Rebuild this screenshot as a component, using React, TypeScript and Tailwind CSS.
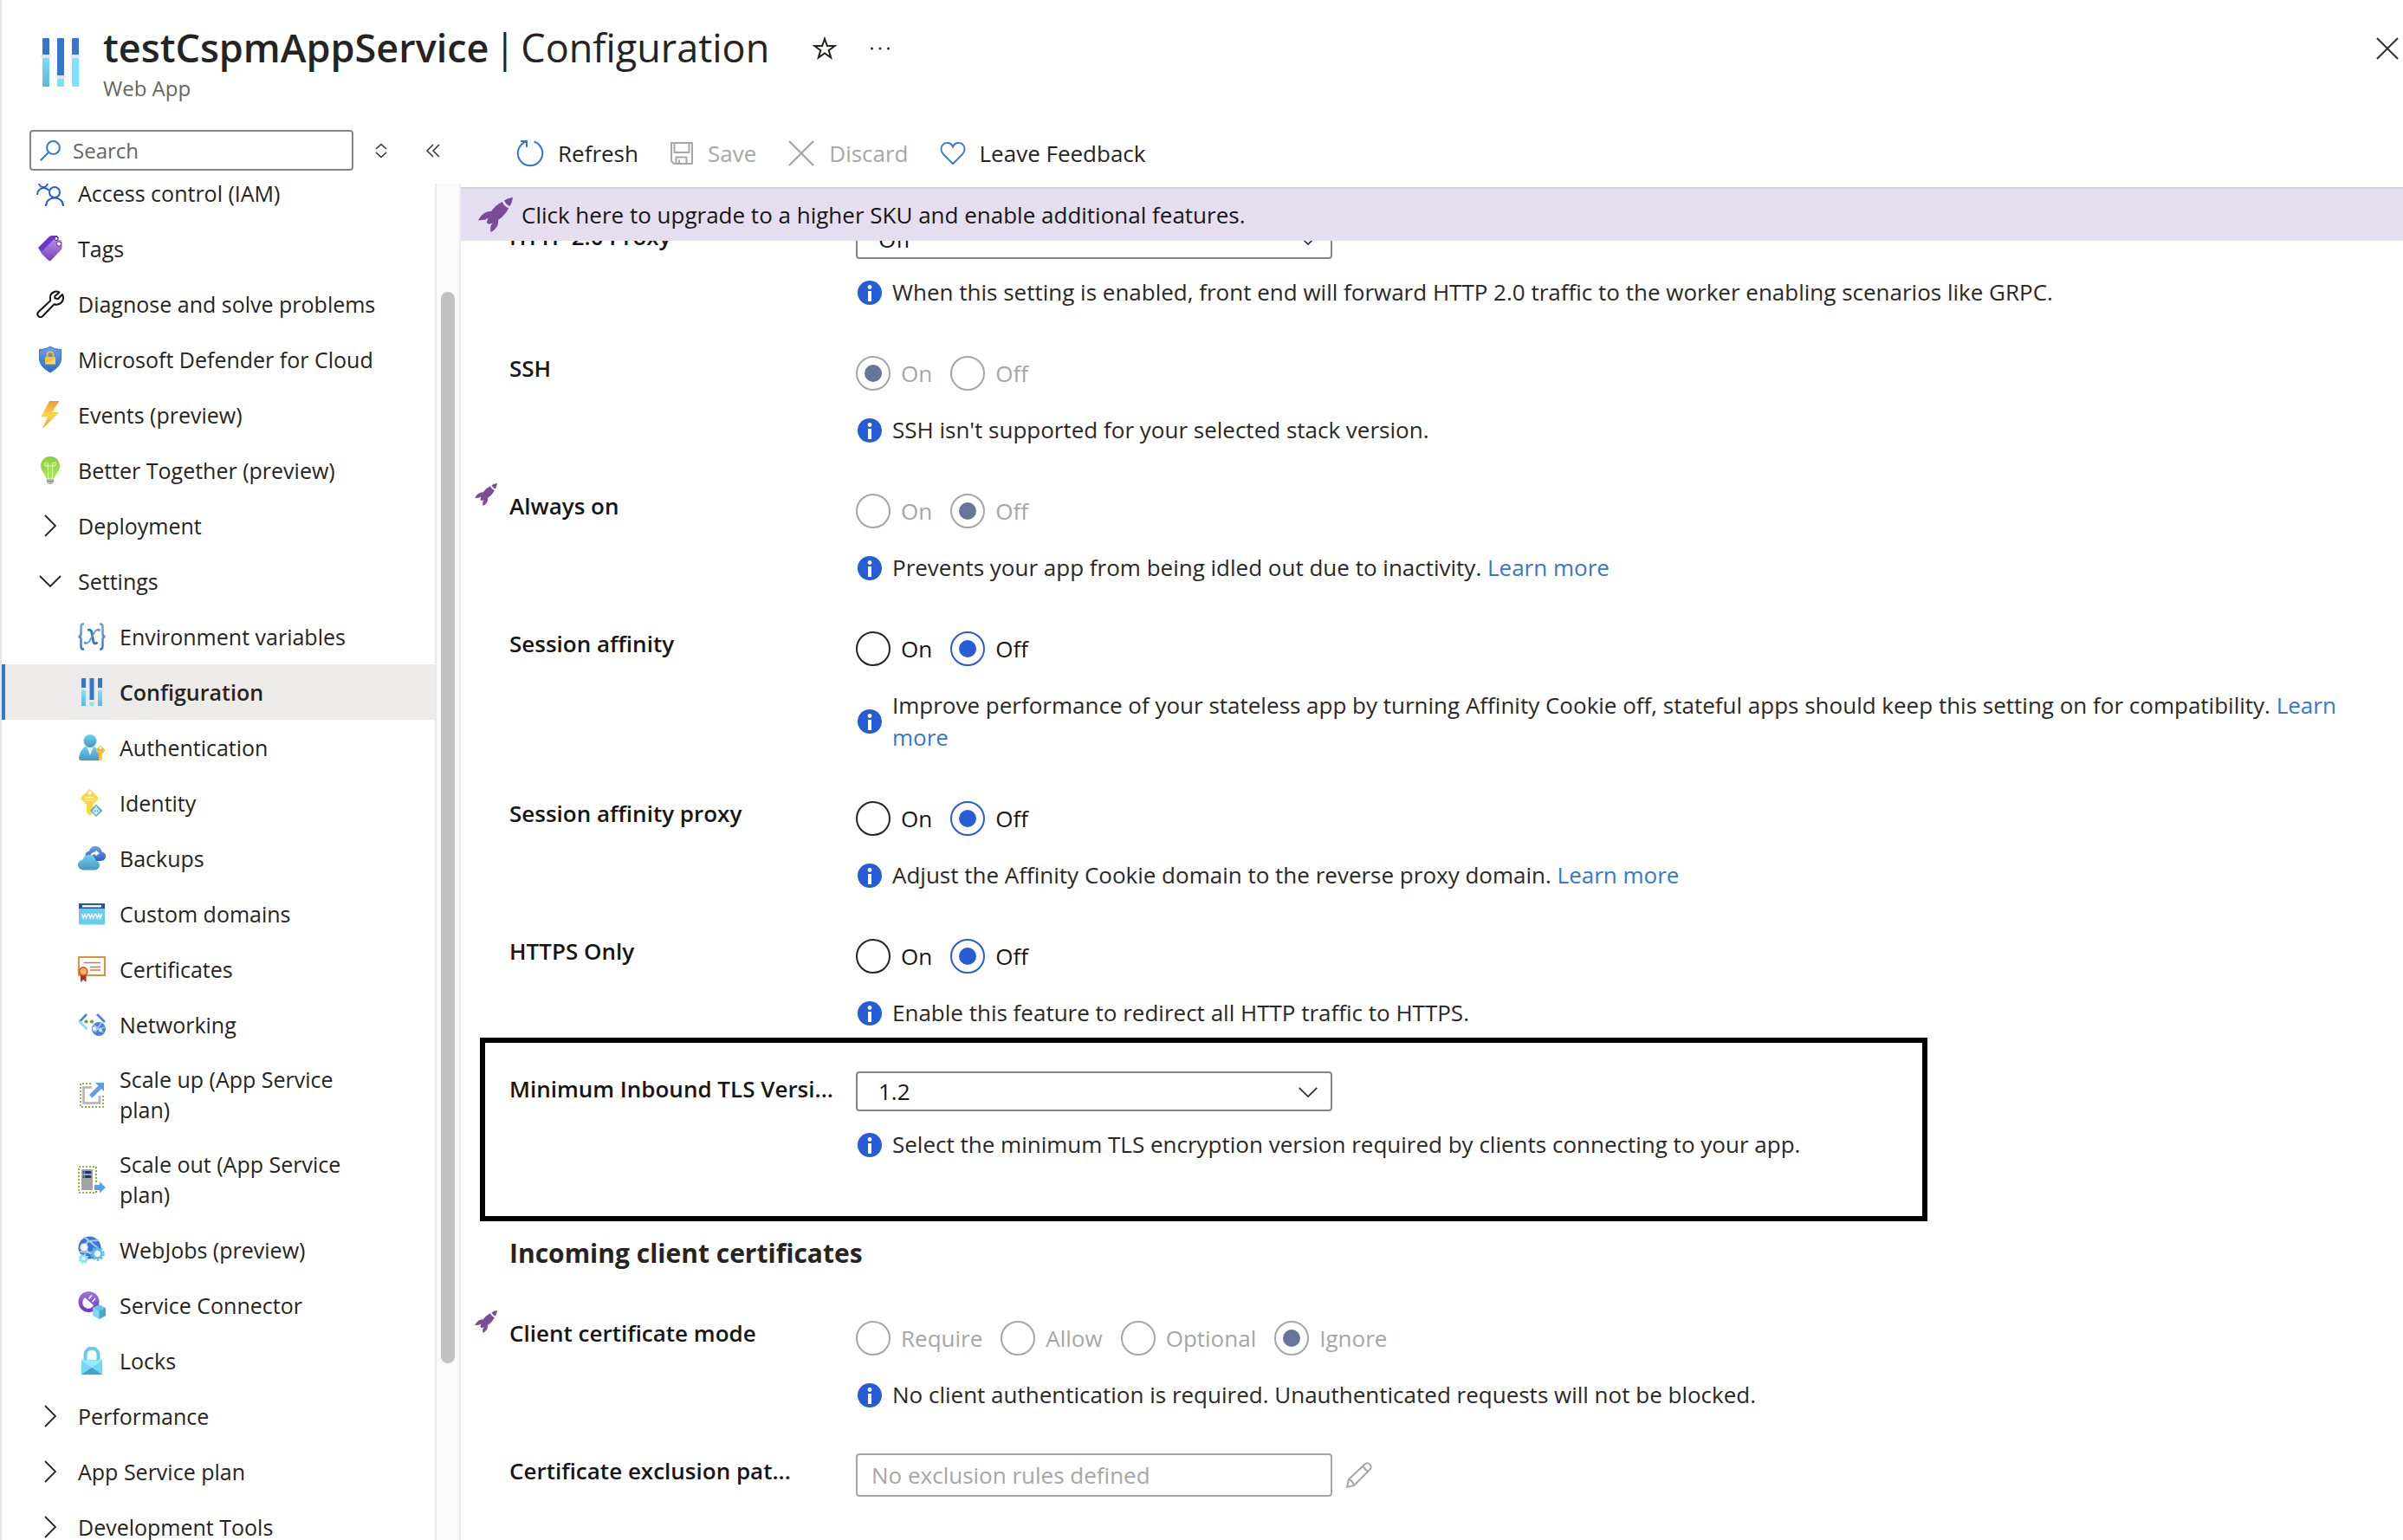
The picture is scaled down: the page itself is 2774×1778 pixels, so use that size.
import React from "react";

type IconProps = { className?: string };

/* ---------- header and toolbar icons ---------- */

const SlidersLarge = () => (
  <svg viewBox="0 0 46 56" className="h-14 w-[46px] shrink-0" aria-hidden="true">
    <defs>
      <linearGradient id="sl" x1="0" y1="0" x2="0" y2="1">
        <stop offset="0" stopColor="#7be3ff" />
        <stop offset="1" stopColor="#5fb4d4" />
      </linearGradient>
    </defs>
    <rect x="2" y="0" width="8" height="20" rx="1" fill="#3477d0" />
    <rect x="2" y="20" width="8" height="36" rx="1" fill="url(#sl)" />
    <rect x="19" y="0" width="8" height="44" rx="1" fill="#3477d0" />
    <rect x="19" y="44" width="8" height="12" rx="1" fill="#7be3ff" />
    <rect x="36" y="0" width="8" height="20" rx="1" fill="#3477d0" />
    <rect x="36" y="20" width="8" height="36" rx="1" fill="#7be3ff" />
    <rect x="0" y="19" width="12" height="4" rx="2" fill="#e6e6e6" />
    <rect x="17" y="43" width="12" height="4" rx="2" fill="#e6e6e6" />
    <rect x="34" y="19" width="12" height="4" rx="2" fill="#e6e6e6" />
  </svg>
);

const Star = () => (
  <svg viewBox="0 0 28 28" className="size-7" fill="none" stroke="#252423" strokeWidth="2" strokeLinejoin="miter" aria-hidden="true">
    <path d="M14 2.8 L16.9 11 H25.6 L18.7 16.1 L21.2 24.6 L14 19.5 L6.8 24.6 L9.3 16.1 L2.4 11 H11.1 Z" />
  </svg>
);

const Dots = () => (
  <svg viewBox="0 0 24 8" className="h-2 w-6" fill="#252423" aria-hidden="true">
    <circle cx="2.5" cy="4" r="1.5" />
    <circle cx="12" cy="4" r="1.5" />
    <circle cx="21.5" cy="4" r="1.5" />
  </svg>
);

const Close = () => (
  <svg viewBox="0 0 26 26" className="size-[26px]" fill="none" stroke="#323130" strokeWidth="2" aria-hidden="true">
    <path d="M1 1 L25 25 M25 1 L1 25" />
  </svg>
);

const Magnifier = () => (
  <svg viewBox="0 0 24 24" className="size-6 shrink-0" fill="none" stroke="#3477d0" strokeWidth="2" aria-hidden="true">
    <circle cx="15.5" cy="8.5" r="7.4" />
    <path d="M10 14 L0.7 23.3" />
  </svg>
);

const UpDown = () => (
  <svg viewBox="0 0 14 18" className="h-[18px] w-3.5" fill="none" stroke="#323130" strokeWidth="1.6" aria-hidden="true">
    <path d="M1 7 L7 1.5 L13 7 M1 11 L7 16.5 L13 11" />
  </svg>
);

const DoubleLeft = () => (
  <svg viewBox="0 0 16 16" className="size-4" fill="none" stroke="#323130" strokeWidth="1.5" aria-hidden="true">
    <path d="M8 1 L1 8 L8 15 M15 1 L8 8 L15 15" />
  </svg>
);

const Refresh = () => (
  <svg viewBox="0 0 32 32" className="size-8" fill="none" stroke="#3477d0" strokeWidth="2" aria-hidden="true">
    <path d="M20.500 2.500 A14.200 14.200 0 1 1 11.500 2.500" />
    <path d="M5 2 H12 V9" />
  </svg>
);

const SaveIcon = () => (
  <svg viewBox="0 0 28 28" className="size-7" fill="none" stroke="#a6a6a6" strokeWidth="2" strokeLinejoin="round" aria-hidden="true">
    <path d="M2 2 H26 V26 H5 L2 23 Z" />
    <path d="M5.5 2 V13 H22.5 V2" />
    <path d="M7.5 26 V18.5 H19.5 V26 M11 21.5 V26" />
  </svg>
);

const Discard = () => (
  <svg viewBox="0 0 32 32" className="size-8" fill="none" stroke="#a6a6a6" strokeWidth="2.4" aria-hidden="true">
    <path d="M2 2 L30 30 M30 2 L2 30" />
  </svg>
);

const Heart = () => (
  <svg viewBox="0 0 32 32" className="size-[30px]" fill="none" stroke="#3477d0" strokeWidth="2" aria-hidden="true">
    <path d="M16 8 C13.5 2 7 2.2 4 5 C.5 8.5 1 13.5 4 17 L16 29 L28 17 C31 13.5 31.500 8.500 28 5 C25 2.200 18.500 2 16 8 Z" />
  </svg>
);

const Rocket = ({ className }: IconProps) => (
  <svg viewBox="0 0 40 40" className={className} fill="#7b4b98" aria-hidden="true">
    <path d="M40 0 C36 .6 33 1.8 30 3.500 C31.200 6.500 33.500 8.800 36.500 10 C38.200 7 39.400 4 40 0 Z" />
    <path d="M27.800 5 C22.500 7.500 18 11.500 15 16 C9 15.500 4 19 0 26.500 L8.500 25.500 L11.500 23.500 C10.800 25.500 10.200 27.300 9.800 29.200 L12.200 30.800 C14.500 30.500 15.500 30.200 17 29.500 L14.800 32 C14 34.500 14 37 14.500 40 C20.500 37 24 32 23 26 C28.500 22.500 32.500 17.500 35.300 12.200 C31.800 11.200 29 8.500 27.800 5 Z" />
  </svg>
);

const Info = () => (
  <svg viewBox="0 0 28 28" className="size-7 shrink-0" role="img" aria-label="Information">
    <circle cx="14" cy="14" r="14" fill="#265cd4" />
    <circle cx="14" cy="7.500" r="2.400" fill="#fff" />
    <rect x="12" y="12" width="4" height="12" fill="#fff" />
  </svg>
);

const Pencil = () => (
  <svg viewBox="0 0 30 30" className="size-[30px]" fill="none" stroke="#a6a6a6" strokeWidth="2" strokeLinejoin="round" aria-hidden="true">
    <path d="M1 29 L3 20 L21.500 2.500 C23 1 25.500 .8 27.300 2.600 C29 4.400 29 7 27.500 8.500 L9 27 Z" />
    <path d="M19.500 4.500 C21 8 22.500 9.500 25.500 10.500 M3 20 C6 21 8 23.500 9 27" />
  </svg>
);

const Chevron = ({ className }: IconProps) => (
  <svg viewBox="0 0 26 14" className={className} fill="none" stroke="#252423" strokeWidth="1.8" aria-hidden="true">
    <path d="M1 1 L13 13 L25 1" />
  </svg>
);

/* ---------- navigation icons, all on a 32 unit grid ---------- */

const Svg = ({ children }: { children: React.ReactNode }) => (
  <svg viewBox="0 0 32 32" className="size-8 shrink-0 overflow-hidden" fill="none" aria-hidden="true">
    {children}
  </svg>
);

const Grad = ({ id, a, b }: { id: string; a: string; b: string }) => (
  <linearGradient id={id} x1="0" y1="0" x2="0" y2="1">
    <stop offset="0" stopColor={a} />
    <stop offset="1" stopColor={b} />
  </linearGradient>
);

const People = () => (
  <Svg>
    <g stroke="#265cd4" strokeWidth="2">
      <circle cx="8" cy="4" r="5" />
      <circle cx="21" cy="15" r="6" />
      <path d="M1 18 C1 13 4.500 10 8.500 10 C11 10 13 11 14.500 13" />
      <path d="M11 31 C11 25 15.500 21.500 21 21.500 C26.500 21.500 31 25 31 31" />
    </g>
  </Svg>
);

const Tag = () => (
  <Svg>
    <defs><Grad id="tg" a="#b98be6" b="#7344b5" /></defs>
    <path d="M2 15 L15 2 C16 1.200 17 1 18 1 H24 L26 4 L6 21 Z" fill="#6c35cc" />
    <path d="M5.500 20 L19 6.500 C20 5.500 21 5 22.500 5 L27.500 6 C29 6.500 29.600 7.500 29.600 9 V14 C29.600 16 29 17 28 18 L17 29.500 C16 30.600 14.800 30.600 13.800 29.500 L5.500 21.500 Z" fill="url(#tg)" />
    <circle cx="23" cy="4.500" r="2" fill="#fff" stroke="#3c1c7d" />
    <circle cx="26" cy="10.500" r="2.600" fill="#fff" stroke="#55309a" />
  </Svg>
);

const Wrench = () => (
  <Svg>
    <path d="M26.500 2.500 C22 0 16 3 16 8.500 C16 10 16 11 16.300 12 L2.500 25 C1 26.500 1 28.500 2.300 30 C3.800 31.400 6 31.300 7.300 30 L20.500 16.200 C26 18 31 14 31 9 C31 7.500 30.700 6.500 30 5 L25 10 L21.500 9.500 L21.300 7 Z" stroke="#111" strokeWidth="2" strokeLinejoin="round" />
  </Svg>
);

const Shield = () => (
  <Svg>
    <defs><Grad id="sh" a="#6ea2ea" b="#2d6bcb" /></defs>
    <path d="M16 1 C19.500 3.500 24 4.500 28.500 4.500 V15 C28.500 22.500 22 27.500 16 31 C10 27.500 3.500 22.500 3.500 15 V4.500 C8 4.500 12.500 3.500 16 1 Z" fill="url(#sh)" stroke="#2f72cf" strokeWidth="1" />
    <path d="M12.500 14 V11 C12.500 6 19.500 6 19.500 11 V14" stroke="#f3bd40" strokeWidth="2" />
    <rect x="10" y="13" width="12" height="8.500" rx="1" fill="#f5c344" />
    <path d="M10 21 L22 14 V21.500 H10 Z" fill="#ffe08a" opacity=".5" />
  </Svg>
);

const Bolt = () => (
  <Svg>
    <defs>
      <linearGradient id="bo" x1="0" y1="0" x2="0" y2="1">
        <stop offset="0" stopColor="#ee9a35" />
        <stop offset=".5" stopColor="#fad648" />
        <stop offset="1" stopColor="#ee9a35" />
      </linearGradient>
    </defs>
    <path d="M15 0 H26.500 L18 13 H26.500 L7 32 L13 18 H5.500 Z" fill="url(#bo)" />
  </Svg>
);

const Bulb = () => (
  <Svg>
    <defs><Grad id="bu" a="#8ccf42" b="#a8e653" /></defs>
    <path d="M16 0 C9.500 0 5 4.800 5 11 C5 17 10 19.500 11.500 25.500 H20.500 C22 19.500 27 17 27 11 C27 4.800 22.500 0 16 0 Z" fill="url(#bu)" />
    <g stroke="#dcf7ae" strokeWidth="1.200">
      <circle cx="11.500" cy="9" r="2" />
      <circle cx="20.500" cy="9" r="2" />
      <path d="M13.500 9 V25 M18.500 9 V25 M12 11 H20" />
    </g>
    <path d="M12 26 H20 V29.500 L18 32 H14 L12 29.500 Z" fill="#b5b5b5" />
    <path d="M12 28.500 H20" stroke="#8b8b8b" />
  </Svg>
);

const Variables = () => (
  <Svg>
    <defs><Grad id="va" a="#6d9fe9" b="#3170cc" /></defs>
    <g stroke="url(#va)" strokeWidth="2.400">
      <path d="M7 1.500 H6 C4 1.500 3.500 2.500 3.500 4.500 V12.500 C3.500 14.500 2.500 16 .5 16 C2.500 16 3.500 17.500 3.500 19.500 V27 C3.500 29.500 4 30.500 6 30.500 H7" />
      <path d="M25 1.500 H26 C28 1.500 28.500 2.500 28.500 4.500 V12.500 C28.500 14.500 29.500 16 31.500 16 C29.500 16 28.500 17.500 28.500 19.500 V27 C28.500 29.500 28 30.500 26 30.500 H25" />
    </g>
    <path d="M11 8.500 C15 7.500 15.500 9 16.200 13 L17.500 20 C18 24 19 25.500 22.500 22.500" stroke="#3170cc" strokeWidth="2.800" />
    <path d="M25 8 C21 6.500 19 11 16.500 15.500 C14 20 12 25 7.500 23.500" stroke="#5b92e2" strokeWidth="1.800" />
    <circle cx="24.300" cy="8.600" r="1.500" fill="#5b92e2" />
    <circle cx="8.200" cy="23" r="1.500" fill="#5b92e2" />
  </Svg>
);

const Sliders = () => (
  <Svg>
    <defs><Grad id="ss" a="#7be3ff" b="#62b6d6" /></defs>
    <rect x="4" y="0" width="5" height="11" fill="#3477d0" />
    <rect x="4" y="13.500" width="5" height="18.500" fill="url(#ss)" />
    <rect x="13.500" y="0" width="5" height="25" fill="#3477d0" />
    <rect x="13.500" y="27.500" width="5" height="4.500" fill="#7be3ff" />
    <rect x="23" y="0" width="5" height="11" fill="#3477d0" />
    <rect x="23" y="13.500" width="5" height="18.500" fill="url(#ss)" />
    <g fill="#e9e7e6">
      <rect x="3" y="11" width="7" height="2.500" />
      <rect x="12.500" y="25" width="7" height="2.500" />
      <rect x="22" y="11" width="7" height="2.500" />
    </g>
  </Svg>
);

const Person = () => (
  <Svg>
    <defs>
      <Grad id="pe" a="#6ad2f0" b="#4894c0" />
      <Grad id="pk" a="#f5ac38" b="#f8cf3e" />
    </defs>
    <path d="M1 28 C2 22 5 16 9 15 H18 C22 16 25 22 26 28 C26 30 25 31 23 31 H4 C2 31 1 30 1 28 Z" fill="url(#pe)" />
    <path d="M10 14.500 H18 L14 25 Z" fill="#e9f7fc" />
    <circle cx="14" cy="8.500" r="7.500" fill="url(#pe)" />
    <path d="M26 13.500 L31 18.500 V20 L28 23.500 V29 L26 31.500 L24 29.500 V23.500 L20.800 20 V18.500 Z" fill="url(#pk)" />
    <circle cx="26" cy="16.500" r="1.400" fill="#fff" />
  </Svg>
);

const IdentityIcon = () => (
  <Svg>
    <path d="M13.500 0 L23 9 C23.500 10 23.500 11 23 12 L17.500 17.500 V24 L15.500 26 L17 27.500 L14 31 L10 27 V18 L4 12 C3.500 11 3.500 10 4 9 Z" fill="#f8d648" />
    <circle cx="13.500" cy="4.500" r="2" fill="#fff" />
    <path d="M8 10 H19 M8 13 H19" stroke="#fdf0a8" strokeWidth="1.500" />
    <path d="M21 17.500 L28.500 25 L21 32 L14 25 Z" fill="#62aed0" />
    <path d="M21 19.500 V29 M17.500 25.500 L21 21 L24.500 25.500 L21 29 Z" stroke="#c8effc" strokeWidth="1.400" />
  </Svg>
);

const Clouds = () => (
  <Svg>
    <defs>
      <Grad id="c1" a="#6d9ce8" b="#2c64cb" />
      <Grad id="c2" a="#69d2f0" b="#4898bd" />
    </defs>
    <path d="M14 19 C10 18 8 15 8.500 12 C9 9 11 8 13 7.500 C14.500 3.500 17 2 20 2 C24 2 27 4.500 27.500 8.500 C30.500 9 32 11 32 13.800 C32 17 29.500 19 26.500 19 Z" fill="url(#c1)" />
    <path d="M14 13 C15 10 17 8.500 20.500 8.500 V6.500 L25 10 L20.500 13.500 V11.500 C18 11.500 16.500 12 15 14 Z" fill="#fff" />
    <path d="M7 29.500 C3 29.500 0 27 0 23.500 C0 20 2.500 18 5.500 17.500 C6.500 14 9.500 12 13 12 C17.500 12 20 15 20.500 18.500 C23.500 19 25 21 25 23.800 C25 27 22.500 29.500 19 29.500 Z" fill="url(#c2)" />
  </Svg>
);

const Domains = () => (
  <Svg>
    <rect x="1" y="4" width="30" height="24.500" rx="1" fill="#68cdec" />
    <path d="M1 4 H31 V10 H1 Z" fill="#1f59a6" />
    <rect x="5" y="6" width="22" height="2.400" fill="#fff" />
    <path d="M4.500 16 L6.200 21 L8 16.800 L9.700 21 L11.400 16 M12.500 16 L14.200 21 L16 16.800 L17.700 21 L19.400 16 M20.500 16 L22.200 21 L24 16.800 L25.700 21 L27.400 16" stroke="#fff" strokeWidth="1.500" />
  </Svg>
);

const Certificate = () => (
  <Svg>
    <rect x="1" y="2" width="30" height="21" stroke="#e29236" strokeWidth="2" fill="#fff" />
    <path d="M6.500 8.500 H26 M14 13.500 H26 M14 17 H26" stroke="#d07a4c" strokeWidth="1.400" />
    <path d="M3 20 H9.500 V31 L6.200 28 L3 31 Z" fill="#a92c25" />
    <circle cx="6.200" cy="18.500" r="4.600" fill="#f4b35a" stroke="#dd4b3c" strokeWidth="1.600" />
  </Svg>
);

const Network = () => (
  <Svg>
    <path d="M10 4 L1.500 13" stroke="#4287d8" strokeWidth="2.600" />
    <path d="M1.500 12 L10.500 21" stroke="#7be3ff" strokeWidth="2.600" />
    <path d="M22 4 L31 13" stroke="#4287d8" strokeWidth="2.600" />
    <circle cx="9.500" cy="12.500" r="2.100" fill="#6b9f35" />
    <circle cx="16" cy="12.500" r="2.100" fill="#6b9f35" />
    <circle cx="24" cy="21" r="8" fill="#4a80d8" />
    <path d="M18 16 L29 25 M27 14 L19.500 25 M17 23 L31 19" stroke="#a8c6f2" strokeWidth="1.600" />
    <circle cx="19" cy="20.500" r="2.200" fill="#f2f2f2" />
    <circle cx="26" cy="22.500" r="1.900" fill="#d9e5f8" />
  </Svg>
);

const ScaleUp = () => (
  <Svg>
    <path d="M15 3 H3 V30 H29 V16" stroke="#7fb93f" strokeWidth="2" strokeDasharray="2 2" />
    <path d="M16 7.500 H6.500 V25.500 H25 V17" stroke="#b2b2b2" strokeWidth="2.600" />
    <path d="M20 2 H30 V12 L27 9 L16.500 19.500 L13 16 L23.500 5.500 Z" fill="#5b9fe8" />
  </Svg>
);

const ScaleOut = () => (
  <Svg>
    <path d="M21 19 V1 H1 V31 H21 V27" stroke="#7fb93f" strokeWidth="2" strokeDasharray="2 2" />
    <rect x="4" y="4" width="13" height="24" fill="#a3a3a3" />
    <rect x="5.500" y="6" width="10" height="3" rx="1.500" fill="#17386f" />
    <rect x="5.500" y="11" width="10" height="3" rx="1.500" fill="#17386f" />
    <circle cx="7.500" cy="7.500" r="1" fill="#6fb1ee" />
    <circle cx="7.500" cy="12.500" r="1" fill="#6fb1ee" />
    <path d="M19 22 H25 V18.500 L32 25 L25 31.500 V28 H19 Z" fill="#5b9fe8" />
  </Svg>
);

const WebJobs = () => (
  <Svg>
    <defs><Grad id="wj" a="#3f79d4" b="#3b6fd0" /></defs>
    <circle cx="13.500" cy="13.500" r="13" fill="url(#wj)" />
    <path d="M7 1 L22 13 M24 5 L12 6 L6 13 M2 18 L20 20 M6 13 L15 21" stroke="#a8c6f2" strokeWidth="2.200" />
    <circle cx="7" cy="13" r="4.600" fill="#f3f3f3" />
    <circle cx="22.500" cy="20.500" r="5" stroke="#5cbfe4" strokeWidth="3" fill="#fff" />
    <circle cx="22.500" cy="20.500" r="7.200" stroke="#5cbfe4" strokeWidth="2" strokeDasharray="2.600 2.050" />
    <circle cx="6.500" cy="26" r="3.400" stroke="#7be3ff" strokeWidth="2.400" fill="#fff" />
    <circle cx="6.500" cy="26" r="5" stroke="#7be3ff" strokeWidth="1.800" strokeDasharray="2 1.930" />
  </Svg>
);

const Connector = () => (
  <Svg>
    <defs><Grad id="cn" a="#9f74ea" b="#6a35c6" /></defs>
    <circle cx="12.500" cy="12" r="12" fill="url(#cn)" />
    <path d="M8 7 L18 16 C16 20 11 21 7.500 18 C4.500 15.500 4.500 10.500 8 7 Z" fill="#fff" />
    <path d="M12.500 8.500 L16 4.500 M16.500 12 L20 8" stroke="#fff" strokeWidth="1.800" />
    <path d="M24.500 15.500 L32 19 V28 L24.500 32 L17 28 V19 Z" fill="#7bdcf5" />
    <path d="M24.500 15.500 L32 19 L24.500 22.500 L17 19 Z" fill="#68c6e4" />
    <path d="M24.500 22.500 L32 19 V28 L24.500 32 Z" fill="#4fa6cc" />
  </Svg>
);

const LockIcon = () => (
  <Svg>
    <path d="M8.500 17 V9.500 C8.500 -1 23.500 -1 23.500 9.500 V17" stroke="#66cbeb" strokeWidth="4" />
    <rect x="4" y="15" width="24" height="17" rx="1" fill="#72d8f3" />
    <path d="M4 15.500 L16 24 L28 15.500 Z" fill="#98ecff" />
    <path d="M4 32 L16 24 L28 32 Z" fill="#4f9ecb" />
  </Svg>
);

/* ---------- navigation ---------- */

type Item = { label: string; icon?: React.ReactNode; sub?: boolean; open?: boolean; active?: boolean };

const items: Item[] = [
  { label: "Access control (IAM)", icon: <People /> },
  { label: "Tags", icon: <Tag /> },
  { label: "Diagnose and solve problems", icon: <Wrench /> },
  { label: "Microsoft Defender for Cloud", icon: <Shield /> },
  { label: "Events (preview)", icon: <Bolt /> },
  { label: "Better Together (preview)", icon: <Bulb /> },
  { label: "Deployment" },
  { label: "Settings", open: true },
  { label: "Environment variables", icon: <Variables />, sub: true },
  { label: "Configuration", icon: <Sliders />, sub: true, active: true },
  { label: "Authentication", icon: <Person />, sub: true },
  { label: "Identity", icon: <IdentityIcon />, sub: true },
  { label: "Backups", icon: <Clouds />, sub: true },
  { label: "Custom domains", icon: <Domains />, sub: true },
  { label: "Certificates", icon: <Certificate />, sub: true },
  { label: "Networking", icon: <Network />, sub: true },
  { label: "Scale up (App Service plan)", icon: <ScaleUp />, sub: true },
  { label: "Scale out (App Service plan)", icon: <ScaleOut />, sub: true },
  { label: "WebJobs (preview)", icon: <WebJobs />, sub: true },
  { label: "Service Connector", icon: <Connector />, sub: true },
  { label: "Locks", icon: <LockIcon />, sub: true },
  { label: "Performance" },
  { label: "App Service plan" },
  { label: "Development Tools" },
];

const NavItem = ({ item }: { item: Item }) => {
  const row = "flex min-h-16 w-full items-center gap-4 border-l-4 py-3.5 pr-20 text-left leading-[35px]";
  if (!item.icon) {
    return (
      <button type="button" aria-expanded={!!item.open} className={`${row} border-transparent pl-9`}>
        <span className="flex w-8 shrink-0 justify-center">
          <Chevron className={item.open ? "h-3.5 w-[26px]" : "h-3.5 w-[26px] -rotate-90"} />
        </span>
        {item.label}
      </button>
    );
  }
  return (
    <a
      href="#"
      aria-current={item.active ? "page" : undefined}
      className={`${row} ${item.sub ? "pl-[84px]" : "pl-9"} ${
        item.active ? "border-[#3477d0] bg-[#ecebe9] font-semibold" : "border-transparent"
      }`}
    >
      {item.icon}
      <span className={item.sub ? "" : "whitespace-nowrap"}>{item.label}</span>
    </a>
  );
};

const Sidebar = () => (
  <aside className="flex w-[532px] shrink-0 flex-col border-l-2 border-[#e6e6e6]">
    <div className="flex items-center pt-7 pb-[15px] pl-8">
      <label className="flex h-[47px] w-[374px] items-center gap-3.5 rounded border-2 border-[#868686] px-2.5">
        <Magnifier />
        <input
          type="search"
          aria-label="Search"
          placeholder="Search"
          className="w-full min-w-0 text-[24px] leading-8 outline-none placeholder:text-[#666564] placeholder:opacity-100"
        />
      </label>
      <button type="button" aria-label="Expand or collapse all" className="ml-[25px]"><UpDown /></button>
      <button type="button" aria-label="Collapse menu" className="ml-[45px]"><DoubleLeft /></button>
    </div>
    <div className="flex min-h-0 flex-1">
      <nav aria-label="Resource menu" className="min-w-0 flex-1 overflow-hidden border-r-2 border-[#e8e8e8] text-[25px] text-[#252423]">
        <ul className="-mt-[21px]">
          {items.map((item) => (
            <li key={item.label}><NavItem item={item} /></li>
          ))}
        </ul>
      </nav>
      <div className="flex w-7 flex-col border-r-2 border-[#ededed] bg-[#fafafa] px-[5px]" aria-hidden="true">
        <div className="grow-[125]" />
        <div className="w-4 grow-[1237] rounded-full bg-[#c1c1c1]" />
        <div className="grow-[204]" />
      </div>
    </div>
  </aside>
);

/* ---------- settings form ---------- */

const Row = ({ label, id, premium, help, link, children }: {
  label: string;
  id: string;
  premium?: boolean;
  help?: string;
  link?: boolean;
  children: React.ReactNode;
}) => (
  <div className="flex items-start">
    <div className="flex w-[440px] shrink-0 items-start">
      <span className="-mt-1.5 w-10 shrink-0">{premium && <Rocket className="size-[26px]" />}</span>
      <label id={`${id}-label`} htmlFor={id} className="text-[26px] leading-10 font-semibold whitespace-nowrap text-[#171615]">
        {label}
      </label>
    </div>
    <div className="min-w-0 flex-1">
      {children}
      {help && (
        <div className="mt-5 flex items-center gap-3 pl-0.5 leading-[37px]">
          <Info />
          <p>
            {help} {link && <a href="#" className="text-[#3477d0]">Learn more</a>}
          </p>
        </div>
      )}
    </div>
  </div>
);

const Radios = ({ id, options, value, disabled }: { id: string; options: string[]; value: string; disabled?: boolean }) => (
  <div role="radiogroup" aria-labelledby={`${id}-label`} className="flex items-center gap-[21px] pt-1.5 pb-[7px]">
    {options.map((option, i) => (
      <label key={option} className={`flex h-10 items-center gap-3 ${disabled ? "text-[#a6a6a6]" : "text-[#171615]"}`}>
        <input
          id={i === 0 ? id : undefined}
          type="radio"
          name={id}
          defaultChecked={option === value}
          disabled={disabled}
          className="grid size-10 shrink-0 appearance-none place-content-center rounded-full border-2 border-[#252423] before:size-5 before:rounded-full before:content-[''] checked:border-[#265cd4] checked:before:bg-[#265cd4] disabled:border-[#a6a6a6] disabled:checked:before:bg-[#65759b]"
        />
        {option}
      </label>
    ))}
  </div>
);

const Select = ({ id, value, options }: { id: string; value: string; options: string[] }) => (
  <div className="relative w-[550px] max-w-full">
    <select
      id={id}
      defaultValue={value}
      className="h-[46px] w-full appearance-none rounded border-2 border-[#868686] bg-white pl-6 text-[26px] leading-8 text-[#171615]"
    >
      {options.map((o) => <option key={o}>{o}</option>)}
    </select>
    <Chevron className="pointer-events-none absolute top-[18px] right-4 h-3 w-6" />
  </div>
);

const onOff = ["On", "Off"];

const Form = () => (
  <form className="-mt-[25px] pr-9 pl-4 text-[26px] text-[#292827]">
    <div className="flex flex-col gap-[49px]">
      <Row id="http2" label="HTTP 2.0 Proxy" help="When this setting is enabled, front end will forward HTTP 2.0 traffic to the worker enabling scenarios like GRPC.">
        <Select id="http2" value="Off" options={["Off", "On"]} />
      </Row>
      <Row id="ssh" label="SSH" help="SSH isn't supported for your selected stack version.">
        <Radios id="ssh" options={onOff} value="On" disabled />
      </Row>
      <Row id="always-on" label="Always on" premium link help="Prevents your app from being idled out due to inactivity.">
        <Radios id="always-on" options={onOff} value="Off" disabled />
      </Row>
      <Row id="affinity" label="Session affinity" link help="Improve performance of your stateless app by turning Affinity Cookie off, stateful apps should keep this setting on for compatibility.">
        <Radios id="affinity" options={onOff} value="Off" />
      </Row>
      <Row id="affinity-proxy" label="Session affinity proxy" link help="Adjust the Affinity Cookie domain to the reverse proxy domain.">
        <Radios id="affinity-proxy" options={onOff} value="Off" />
      </Row>
      <Row id="https" label="HTTPS Only" help="Enable this feature to redirect all HTTP traffic to HTTPS.">
        <Radios id="https" options={onOff} value="Off" />
      </Row>
    </div>
    <div className="mt-2.5 ml-1.5 w-[1671px] max-w-full border-6 border-black pt-[33px] pb-16">
      <div className="-ml-3">
        <Row id="tls" label="Minimum Inbound TLS Versi..." help="Select the minimum TLS encryption version required by clients connecting to your app.">
          <Select id="tls" value="1.2" options={["1.0", "1.1", "1.2"]} />
        </Row>
      </div>
    </div>
    <h2 className="mt-[17px] ml-10 text-[30px] leading-10 font-bold text-[#252423]">Incoming client certificates</h2>
    <div className="mt-[52px] flex flex-col gap-[49px]">
      <Row id="cert-mode" label="Client certificate mode" premium help="No client authentication is required. Unauthenticated requests will not be blocked.">
        <Radios id="cert-mode" options={["Require", "Allow", "Optional", "Ignore"]} value="Ignore" disabled />
      </Row>
      <Row id="exclusion" label="Certificate exclusion pat...">
        <div className="flex items-center gap-4">
          <input
            id="exclusion"
            type="text"
            disabled
            placeholder="No exclusion rules defined"
            className="h-[50px] w-[550px] rounded border-2 border-[#a6a6a6] px-4 placeholder:text-[#a6a6a6] placeholder:opacity-100"
          />
          <button type="button" aria-label="Edit exclusion rules"><Pencil /></button>
        </div>
      </Row>
    </div>
  </form>
);

const ToolButton = ({ icon, label, disabled }: { icon: React.ReactNode; label: string; disabled?: boolean }) => (
  <button type="button" disabled={disabled} className="flex items-center gap-4 disabled:text-[#a6a6a6]">
    {icon}
    {label}
  </button>
);

export default function App() {
  return (
    <div className="flex h-screen flex-col overflow-hidden bg-white font-['Open_Sans','Noto_Sans',sans-serif] text-[#252423]">
      <header className="flex items-start border-l-2 border-[#e6e6e6] pt-7 pl-[45px]">
        <div className="pt-4"><SlidersLarge /></div>
        <div className="ml-[26px]">
          <h1 className="flex gap-1.5 text-[45px] leading-[54px] font-semibold">
            <span>testCspmAppService</span>
            <span className="font-normal">|</span>
            <span className="font-normal">Configuration</span>
          </h1>
          <p className="text-[24px] leading-10 text-[#666564]">Web App</p>
        </div>
        <button type="button" aria-label="Favorite" className="mt-3.5 ml-[50px]"><Star /></button>
        <button type="button" aria-label="More actions" className="mt-6 ml-[38px]"><Dots /></button>
        <button type="button" aria-label="Close" className="mt-[15px] mr-[5px] ml-auto"><Close /></button>
      </header>
      <div className="flex min-h-0 flex-1">
        <Sidebar />
        <main className="flex min-w-0 flex-1 flex-col">
          <div role="toolbar" aria-label="Commands" className="flex h-[94px] shrink-0 items-center gap-9 pt-4 pl-16 text-[26px]">
            <ToolButton icon={<Refresh />} label="Refresh" />
            <ToolButton icon={<SaveIcon />} label="Save" disabled />
            <ToolButton icon={<Discard />} label="Discard" disabled />
            <ToolButton icon={<Heart />} label="Leave Feedback" />
          </div>
          <a href="#" className="flex h-[62px] shrink-0 items-center gap-2.5 border-t-2 border-[#d2d0d2] bg-[#e4def0] pl-5 text-[26px] text-[#171615]">
            <Rocket className="size-10" />
            Click here to upgrade to a higher SKU and enable additional features.
          </a>
          <div className="min-h-0 flex-1 overflow-hidden">
            <Form />
          </div>
        </main>
      </div>
    </div>
  );
}
